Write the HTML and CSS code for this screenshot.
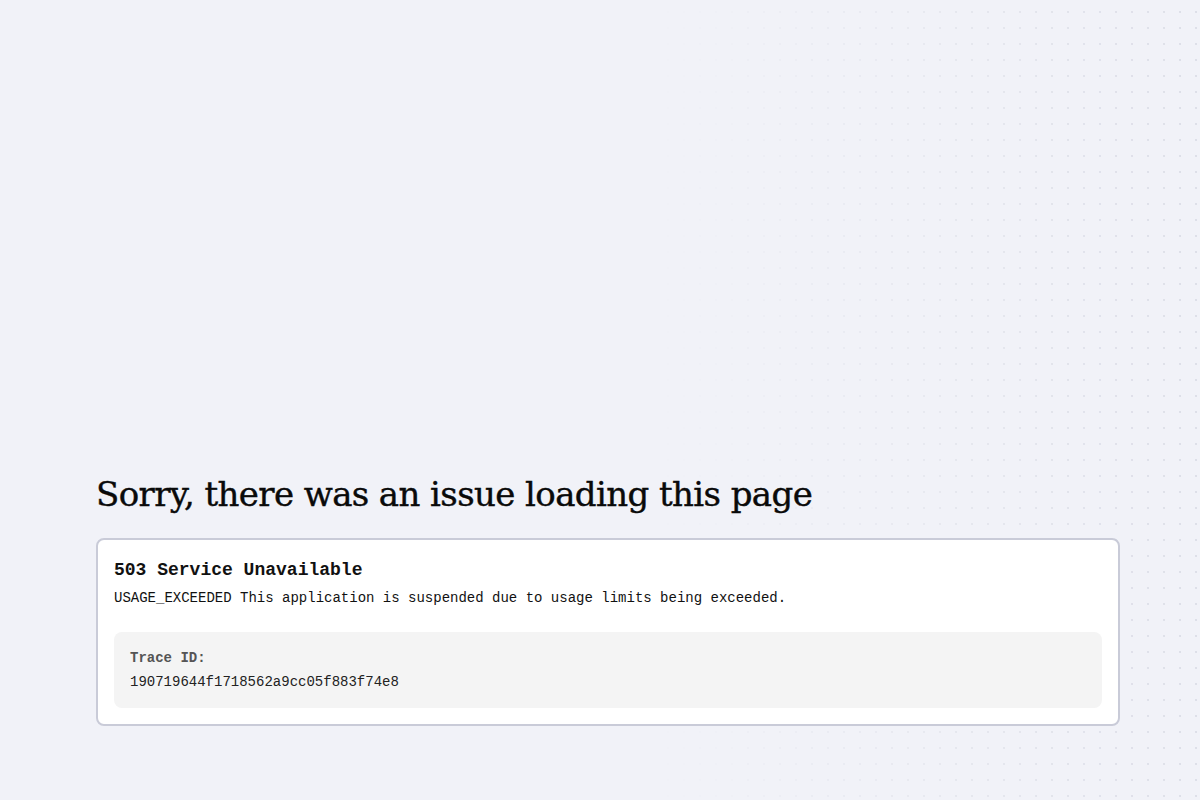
FILE: index.html
```html
<!DOCTYPE html>
<html lang="en">
<head>
<meta charset="utf-8">
<title>Error</title>
<link rel="stylesheet" href="styles.css">
</head>
<body>
<div class="bg"></div>
<main class="page">
  <h1 class="title">Sorry, there was an issue loading this page</h1>
  <section class="card">
    <h2 class="code">503 Service Unavailable</h2>
    <p class="msg">USAGE_EXCEEDED This application is suspended due to usage limits being exceeded.</p>
    <div class="trace">
      <div class="trace-label">Trace ID:</div>
      <div class="trace-id">190719644f1718562a9cc05f883f74e8</div>
    </div>
  </section>
</main>
</body>
</html>
```

FILE: styles.css
```css
html, body {
  margin: 0;
  padding: 0;
  height: 100%;
}
body {
  background: #f1f2f8;
  font-family: "Liberation Mono", monospace;
  color: #111;
  position: relative;
  overflow: hidden;
}
.bg {
  position: absolute;
  inset: 0;
  background-image: radial-gradient(circle, rgba(120,125,150,0.16) 1px, transparent 1.4px);
  background-size: 16px 16px;
  background-position: 4px 4px;
  -webkit-mask-image: linear-gradient(to right, transparent 55%, #000 100%);
  mask-image: linear-gradient(to right, transparent 55%, #000 100%);
  pointer-events: none;
}
.page {
  position: relative;
  display: flex;
  flex-direction: column;
  padding: 470px 80px 0 96px;
}
.title {
  font-family: "DejaVu Serif", serif;
  font-weight: 400;
  font-size: 34px;
  line-height: 48px;
  margin: 0 0 20px 0;
  color: #0a0a0a;
  letter-spacing: -0.6px;
  -webkit-text-stroke: 0.4px #0a0a0a;
}
.card {
  background: #fff;
  border: 2px solid #c9cbd8;
  border-radius: 8px;
  padding: 16px 16px 16px 16px;
}
.code {
  font-family: "Liberation Mono", monospace;
  font-size: 18px;
  font-weight: 700;
  line-height: 26px;
  margin: 1px 0 5px 0;
}
.msg {
  font-size: 14px;
  line-height: 20px;
  margin: 0 0 24px 0;
}
.trace {
  background: #f4f4f4;
  border-radius: 8px;
  padding: 16px;
  color: #222;
}
.trace-label {
  font-size: 14px;
  font-weight: 700;
  color: #555;
  line-height: 20px;
  margin-bottom: 4px;
}
.trace-id {
  font-size: 14px;
  line-height: 20px;
}
```
